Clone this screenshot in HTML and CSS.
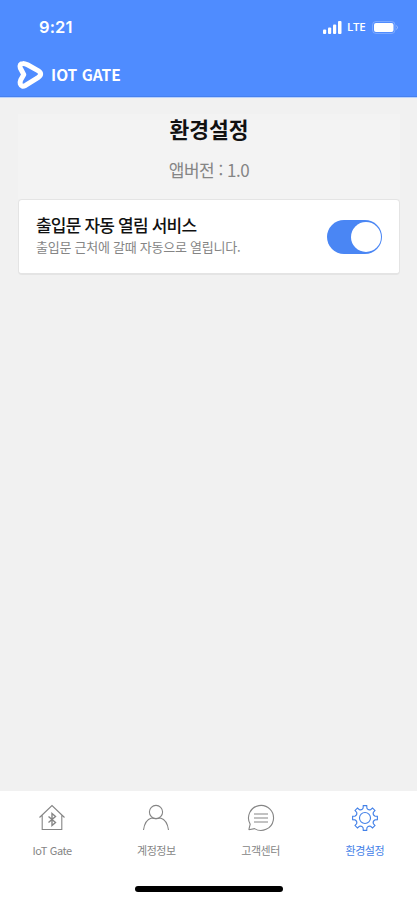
FILE: index.html
```html
<!DOCTYPE html>
<html lang="ko">
<head>
<meta charset="utf-8">
<meta name="viewport" content="width=device-width, initial-scale=1">
<title>환경설정</title>
<link rel="stylesheet" href="styles.css">
</head>
<body>
<header class="header">
  <div class="status">
    <span class="time">9:21</span>
    <div class="signals">
      <svg width="19" height="13" viewBox="0 0 19 13" fill="#fff"><rect x="0" y="8.5" width="3.2" height="4.5" rx="1"/><rect x="5" y="6.5" width="3.2" height="6.5" rx="1"/><rect x="10" y="3.5" width="3.2" height="9.5" rx="1"/><rect x="15" y="0" width="3.5" height="13" rx="1"/></svg>
      <span class="lte">LTE</span>
      <svg width="27" height="13" viewBox="0 0 27 13"><rect x=".5" y=".5" width="22.5" height="12" rx="3.5" fill="none" stroke="#fff" stroke-opacity=".25"/><rect x="2" y="2" width="19.5" height="9" rx="2" fill="#fff"/><path d="M24.5 4.5q2 2 0 4" fill="none" stroke="#fff" stroke-opacity=".4"/></svg>
    </div>
  </div>
  <div class="brand">
    <svg width="28" height="30" viewBox="0 0 28 30" fill="none" stroke="#fff" stroke-width="5" stroke-linejoin="round"><path d="M3.3 8Q2.2 3.5 5.8 3.4Q7.6 3.3 10.5 4.7L21 10.6Q26.3 14 21 17.6L8.5 25.4Q4.5 27.4 3.3 24Q2.8 22 3.7 20L6.8 14.6Z"/></svg>
    <span class="name">IOT GATE</span>
  </div>
</header>
<main class="main">
  <section class="intro">
    <h1>환경설정</h1>
    <p>앱버전 : 1.0</p>
  </section>
  <section class="card">
    <div>
      <h2>출입문 자동 열림 서비스</h2>
      <p>출입문 근처에 갈때 자동으로 열립니다.</p>
    </div>
    <div class="toggle"><span class="knob"></span></div>
  </section>
</main>
<nav class="tabs">
  <div class="tab">
    <svg viewBox="-15 -15 30 30"><path d="M-12.5-.5L0-12.5L12.5-.5M-9.8-3V11.5H9.8V-3"/><path d="M-3.5-1.5L3.5 4.5L0 7.5V-4.5L3.5-1.5L-3.5 4.5" stroke-width="1.4"/></svg>
    <span>IoT Gate</span>
  </div>
  <div class="tab">
    <svg viewBox="-15 -15 30 30"><circle cx="0" cy="-6" r="6.6"/><path d="M-12.5 12C-11.5 4.5-8 1-4.5 0Q0 1.5 4.5 0C8 1 11.5 4.5 12.5 12"/></svg>
    <span>계정정보</span>
  </div>
  <div class="tab">
    <svg viewBox="-15 -15 30 30"><path d="M-12.2 11.8L-10.8 6.2A12.5 12.5 0 1 1-6.5 10.6L-12.2 11.8M-7-4H7M-7 0H7M-7 4H7"/></svg>
    <span>고객센터</span>
  </div>
  <div class="tab active">
    <svg viewBox="-15 -15 30 30"><circle r="5.5"/><path d="M-1.74-12.38H1.74L1.91-9.82Q3.14-7.58 5.59-8.29L7.52-9.98L9.98-7.52L8.29-5.59Q7.58-3.14 9.82-1.91L12.38-1.74V1.74L9.82 1.91Q7.58 3.14 8.29 5.59L9.98 7.52L7.52 9.98L5.59 8.29Q3.14 7.58 1.91 9.82L1.74 12.38H-1.74L-1.91 9.82Q-3.14 7.58-5.59 8.29L-7.52 9.98L-9.98 7.52L-8.29 5.59Q-7.58 3.14-9.82 1.91L-12.38 1.74V-1.74L-9.82-1.91Q-7.58-3.14-8.29-5.59L-9.98-7.52L-7.52-9.98L-5.59-8.29Q-3.14-7.58-1.91-9.82Z"/></svg>
    <span>환경설정</span>
  </div>
  <div class="home-bar"></div>
</nav>
</body>
</html>
```
FILE: styles.css
```css
* { box-sizing: border-box; }
body {
  margin: 0;
  height: 900px;
  display: flex;
  flex-direction: column;
  background: #f1f1f1;
  font-family: Roboto, "Noto Sans CJK KR", sans-serif;
}
h1, h2, p { margin: 0; }
svg { display: block; flex: none; }
.header {
  height: 98px;
  background: #4f8cff;
  border-bottom: 1px solid #b9d1fb;
  box-shadow: inset 0 -1px #4681ef;
  color: #fff;
}
.status {
  height: 54px;
  padding: 0 18px 0 39px;
  display: flex;
  align-items: center;
  justify-content: space-between;
}
.time { font: 600 16.5px/20px Inter, sans-serif; letter-spacing: .1px; }
.signals { display: flex; align-items: center; gap: 5px; }
.lte { font: 600 11.5px/14px "Open Sans", sans-serif; letter-spacing: -.2px; width: 20px; }
.brand { display: flex; align-items: center; gap: 6px; padding-left: 17px; height: 41px; }
.name { font: 700 15.5px/20px "Noto Sans CJK KR", sans-serif; letter-spacing: .02px; padding-bottom: 2px; }
.main { flex: 1; padding: 16px 17px 16px 18px; }
.intro { height: 85px; text-align: center; background: #f3f3f3; }
h1 { font-size: 21.5px; line-height: 30px; font-weight: 700; color: #111; font-family: "Noto Sans CJK KR", sans-serif; }
.intro p { margin-top: 16px; font: 400 17px/20px "Noto Sans CJK KR", sans-serif; letter-spacing: -.5px; color: #858585; }
.card {
  height: 76px;
  display: flex;
  justify-content: space-between;
  align-items: center;
  padding: 0 17px;
  background: #fff;
  border: 1px solid #e4e4e4;
  border-bottom-width: 2px;
  border-radius: 4px;
}
.card > div:first-child { margin-top: -3px; }
h2 { font: 500 17px/24px "Noto Sans CJK KR", sans-serif; letter-spacing: -.8px; color: #111; }
.card p { font: 400 13px/20px "Noto Sans CJK KR", sans-serif; letter-spacing: -.25px; color: #858585; }
.toggle { width: 55px; height: 34px; padding: 2px 1px; border-radius: 17px; background: #4a86f4; display: flex; justify-content: flex-end; }
.knob { width: 30px; height: 30px; border-radius: 50%; background: #fff; }
.tabs {
  height: 109px;
  padding-top: 12px;
  display: grid;
  grid-template-columns: repeat(4, 1fr);
  grid-template-rows: 83px 6px;
  background: #fff;
}
.tab { display: flex; flex-direction: column; align-items: center; color: #858585; font: 400 11px/16px "Noto Sans CJK KR", sans-serif; letter-spacing: -.4px; }
.tab svg { width: 30px; height: 30px; fill: none; stroke: currentColor; stroke-width: 1.1; margin-bottom: 9px; }
.active { color: #4381e8; }
.home-bar { grid-column: 1 / -1; justify-self: center; width: 148px; height: 6px; border-radius: 3px; background: #000; }
```
